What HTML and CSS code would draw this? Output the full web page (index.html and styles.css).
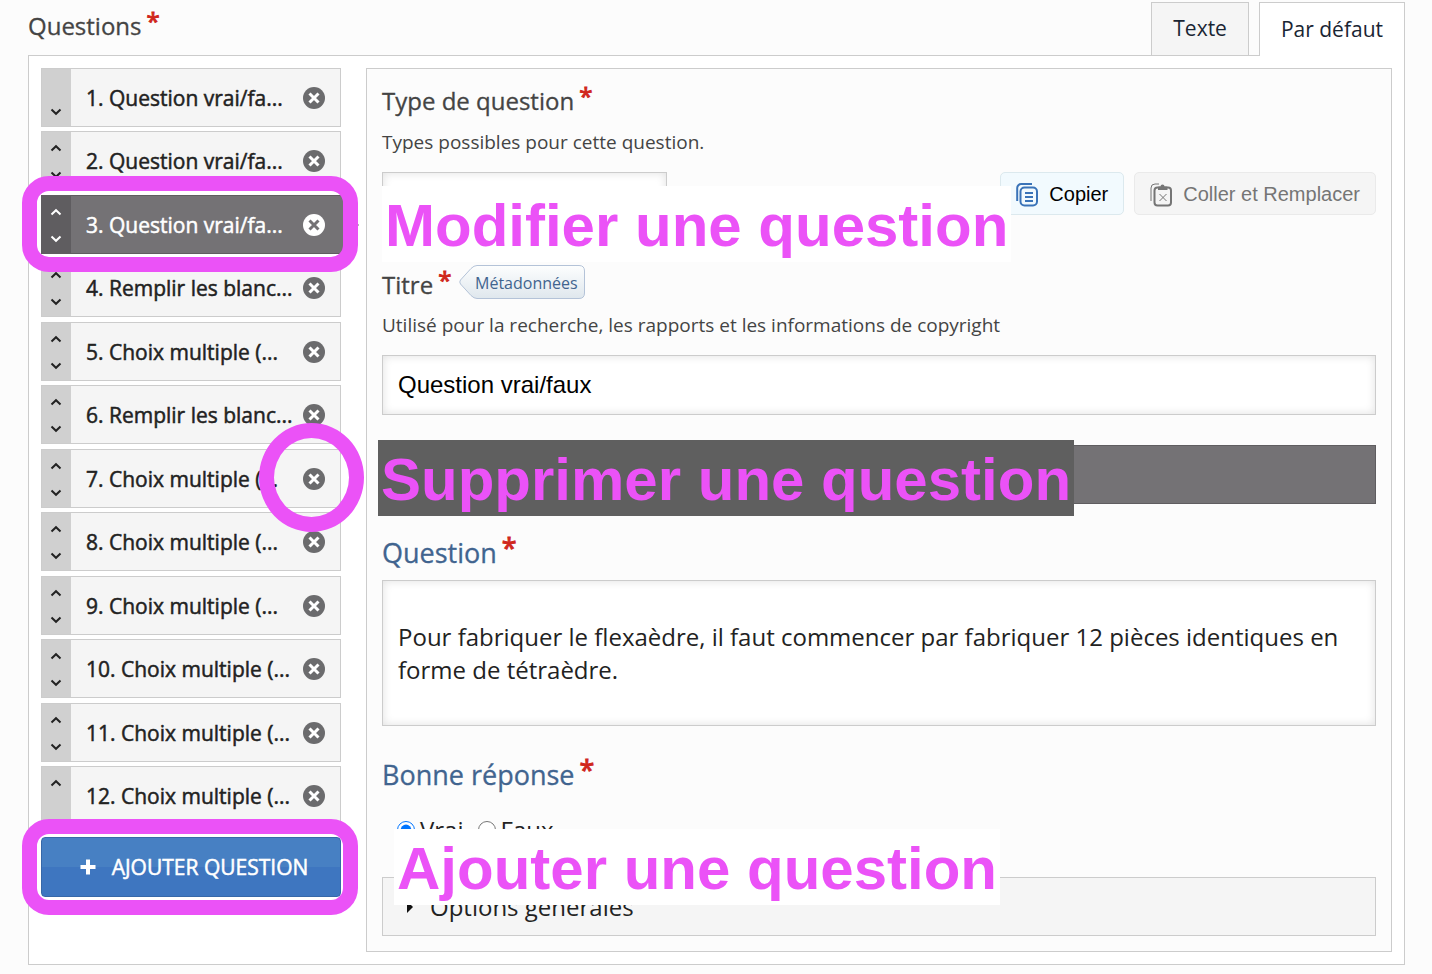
FILE: index.html
```html
<!DOCTYPE html>
<html lang="fr">
  <head>
    <meta charset="UTF-8" />
    <meta name="viewport" content="width=device-width, initial-scale=1.0" />
    <title>Questions</title>
    <link rel="stylesheet" href="styles.css">
  </head>
  <body>
    <svg class="sprite" aria-hidden="true">
      <symbol id="up" viewBox="0 0 12 8"><path d="M1.500 6.500L6 2.200L10.500 6.500" /></symbol>
      <symbol id="down" viewBox="0 0 12 8"><path d="M1.500 1.500L6 5.800L10.500 1.500" /></symbol>
      <symbol id="cross" viewBox="0 0 22 22">
        <circle cx="11" cy="11" r="11" />
        <path d="M6.500 6.500L15.500 15.500M15.500 6.500L6.500 15.500" />
      </symbol>
    </svg>

    <form class="editor">
      <header class="top">
        <h1 class="label">Questions<span class="star">*</span></h1>
        <nav class="tabs">
          <button type="button" class="tab">Texte</button>
          <button type="button" class="tab active">Par défaut</button>
        </nav>
      </header>

      <main class="panel">
        <aside class="side">
          <ol class="list" id="list">
            <li class="item">
              <div class="order"><button type="button" class="down" aria-label="Descendre"><svg><use href="#down" /></svg></button></div>
              <button type="button" class="name">1. Question vrai/fa...</button>
              <button type="button" class="remove" aria-label="Supprimer"><svg><use href="#cross" /></svg></button>
            </li>
            <li class="item">
              <div class="order"><button type="button" class="up" aria-label="Monter"><svg><use href="#up" /></svg></button><button type="button" class="down" aria-label="Descendre"><svg><use href="#down" /></svg></button></div>
              <button type="button" class="name">2. Question vrai/fa...</button>
              <button type="button" class="remove" aria-label="Supprimer"><svg><use href="#cross" /></svg></button>
            </li>
            <li class="item current">
              <div class="order"><button type="button" class="up" aria-label="Monter"><svg><use href="#up" /></svg></button><button type="button" class="down" aria-label="Descendre"><svg><use href="#down" /></svg></button></div>
              <button type="button" class="name">3. Question vrai/fa...</button>
              <button type="button" class="remove" aria-label="Supprimer"><svg><use href="#cross" /></svg></button>
              <span class="frame"></span>
            </li>
            <li class="item">
              <div class="order"><button type="button" class="up" aria-label="Monter"><svg><use href="#up" /></svg></button><button type="button" class="down" aria-label="Descendre"><svg><use href="#down" /></svg></button></div>
              <button type="button" class="name">4. Remplir les blanc...</button>
              <button type="button" class="remove" aria-label="Supprimer"><svg><use href="#cross" /></svg></button>
            </li>
            <li class="item">
              <div class="order"><button type="button" class="up" aria-label="Monter"><svg><use href="#up" /></svg></button><button type="button" class="down" aria-label="Descendre"><svg><use href="#down" /></svg></button></div>
              <button type="button" class="name">5. Choix multiple (...</button>
              <button type="button" class="remove" aria-label="Supprimer"><svg><use href="#cross" /></svg></button>
            </li>
            <li class="item">
              <div class="order"><button type="button" class="up" aria-label="Monter"><svg><use href="#up" /></svg></button><button type="button" class="down" aria-label="Descendre"><svg><use href="#down" /></svg></button></div>
              <button type="button" class="name">6. Remplir les blanc...</button>
              <button type="button" class="remove" aria-label="Supprimer"><svg><use href="#cross" /></svg></button>
            </li>
            <li class="item">
              <div class="order"><button type="button" class="up" aria-label="Monter"><svg><use href="#up" /></svg></button><button type="button" class="down" aria-label="Descendre"><svg><use href="#down" /></svg></button></div>
              <button type="button" class="name">7. Choix multiple (...</button>
              <button type="button" class="remove" aria-label="Supprimer"><svg><use href="#cross" /></svg></button>
              <span class="ring"></span>
            </li>
            <li class="item">
              <div class="order"><button type="button" class="up" aria-label="Monter"><svg><use href="#up" /></svg></button><button type="button" class="down" aria-label="Descendre"><svg><use href="#down" /></svg></button></div>
              <button type="button" class="name">8. Choix multiple (...</button>
              <button type="button" class="remove" aria-label="Supprimer"><svg><use href="#cross" /></svg></button>
            </li>
            <li class="item">
              <div class="order"><button type="button" class="up" aria-label="Monter"><svg><use href="#up" /></svg></button><button type="button" class="down" aria-label="Descendre"><svg><use href="#down" /></svg></button></div>
              <button type="button" class="name">9. Choix multiple (...</button>
              <button type="button" class="remove" aria-label="Supprimer"><svg><use href="#cross" /></svg></button>
            </li>
            <li class="item">
              <div class="order"><button type="button" class="up" aria-label="Monter"><svg><use href="#up" /></svg></button><button type="button" class="down" aria-label="Descendre"><svg><use href="#down" /></svg></button></div>
              <button type="button" class="name">10. Choix multiple (...</button>
              <button type="button" class="remove" aria-label="Supprimer"><svg><use href="#cross" /></svg></button>
            </li>
            <li class="item">
              <div class="order"><button type="button" class="up" aria-label="Monter"><svg><use href="#up" /></svg></button><button type="button" class="down" aria-label="Descendre"><svg><use href="#down" /></svg></button></div>
              <button type="button" class="name">11. Choix multiple (...</button>
              <button type="button" class="remove" aria-label="Supprimer"><svg><use href="#cross" /></svg></button>
            </li>
            <li class="item">
              <div class="order"><button type="button" class="up" aria-label="Monter"><svg><use href="#up" /></svg></button></div>
              <button type="button" class="name">12. Choix multiple (...</button>
              <button type="button" class="remove" aria-label="Supprimer"><svg><use href="#cross" /></svg></button>
            </li>
          </ol>
          <div class="add-wrap">
            <button type="button" class="add">
              <svg class="plus" viewBox="0 0 16 16"><path d="M8 0.500V15.500M0.500 8H15.500" /></svg>
              AJOUTER QUESTION
            </button>
            <span class="frame"></span>
          </div>
        </aside>

        <section class="content">
          <div class="field">
            <label class="label" for="type">Type de question<span class="star">*</span></label>
            <p class="help">Types possibles pour cette question.</p>
            <div class="row">
              <select id="type" class="box"><option></option></select>
              <div class="actions">
                <button type="button" class="copy">
                  <svg viewBox="0 0 22 24">
                    <path d="M1.200 18V5A4 4 0 0 1 5.200 1H16" />
                    <rect x="4.500" y="4.500" width="16.500" height="18" rx="4" />
                    <path d="M9 10H17M9 14H17M9 18H17" />
                  </svg>
                  Copier
                </button>
                <button type="button" class="paste" disabled>
                  <svg viewBox="0 0 22 24">
                    <path class="thin" d="M1 18V5A4 4 0 0 1 5 1H9" />
                    <rect x="4.500" y="4.500" width="16.500" height="18" rx="3" />
                    <path class="clip" d="M8 7V4.500A1 1 0 0 1 9 3.500H10.500A2 2 0 0 1 14.500 3.500H16.500A1 1 0 0 1 17.500 4.500V7Z" />
                    <path class="thin" d="M9.500 11L16.500 18M16.500 11L9.500 18" />
                  </svg>
                  Coller et Remplacer
                </button>
              </div>
              <strong class="note note-edit">Modifier une question</strong>
            </div>
          </div>

          <div class="field title">
            <div class="title-line">
              <label class="label" for="title">Titre<span class="star">*</span></label>
              <button type="button" class="meta">
                <svg viewBox="0 0 126 34">
                  <defs>
                    <linearGradient id="tag" x1="0" y1="0" x2="0" y2="1">
                      <stop offset="0" stop-color="#fdfefe" />
                      <stop offset="1" stop-color="#dfe7ed" />
                    </linearGradient>
                  </defs>
                  <path fill="url(#tag)" stroke="#b4c3d8" d="M1.500 15Q0 17 1.500 19L12 30.500Q15 33.500 18 33.500H120Q125.500 33.500 125.500 28V6Q125.500 0.500 120 0.500H18Q15 0.500 12 3.500Z" />
                </svg>
                <span>Métadonnées</span>
              </button>
            </div>
            <p class="help">Utilisé pour la recherche, les rapports et les informations de copyright</p>
            <input type="text" id="title" class="box" value="Question vrai/faux">
          </div>

          <div class="bar"><strong class="note note-delete">Supprimer une question</strong></div>

          <div class="field">
            <label class="label big" for="question">Question<span class="star">*</span></label>
            <textarea id="question" class="box" rows="2">Pour fabriquer le flexaèdre, il faut commencer par fabriquer 12 pièces identiques en forme de tétraèdre.</textarea>
          </div>

          <fieldset class="answer">
            <legend class="label big">Bonne réponse<span class="star">*</span></legend>
            <div class="radios">
              <label><input type="radio" name="answer" checked>Vrai</label>
              <label><input type="radio" name="answer">Faux</label>
            </div>
          </fieldset>

          <div class="options">
            <button type="button" class="toggle">Options générales</button>
            <strong class="note note-add">Ajouter une question</strong>
          </div>
        </section>
      </main>
    </form>
  </body>
</html>
```
FILE: styles.css
```css
* {
  box-sizing: border-box;
}
body {
  margin: 0;
  background: #fcfcfc;
  color: #222;
  font-family: 'Open Sans', sans-serif;
  font-size: 21px;
}
button,
fieldset {
  margin: 0;
  padding: 0;
  border: 0;
  background: none;
  font: inherit;
  color: inherit;
}
.sprite {
  display: none;
}
.editor {
  padding: 2px 27px 9px 28px;
}

/* header and tabs */
.top {
  display: flex;
  justify-content: space-between;
  align-items: flex-start;
}
.label {
  display: block;
  margin: 0;
  padding: 0;
  font-size: 24px;
  font-weight: 400;
  line-height: 34px;
  color: #444;
  -webkit-text-stroke: 0.3px;
}
.top .label {
  margin-top: 7px;
}
.star {
  margin-left: 5px;
  color: #d0271d;
  line-height: 0;
  vertical-align: 5px;
  -webkit-text-stroke: 1px;
}
.tabs {
  display: flex;
  gap: 10px;
}
.tab {
  height: 53px;
  padding: 0 21px 2px;
  border: 1px solid #ccc;
  border-bottom: 0;
  background: #f5f5f5;
  font-size: 21px;
  color: #1a2533;
}
.tab.active {
  height: 54px;
  margin-bottom: -1px;
  background: #fff;
  position: relative;
}

/* list of questions */
.panel {
  display: flex;
  align-items: flex-start;
  gap: 25px;
  padding: 12px;
  border: 1px solid #ccc;
  background: #fff;
}
.side {
  width: 300px;
  flex: none;
}
.list {
  margin: 0;
  padding: 0;
  list-style: none;
}
.item {
  position: relative;
  display: flex;
  height: 59px;
  margin-bottom: 4px;
  border: 1px solid #ccc;
  background: #f5f5f5;
}
.item:nth-child(even) {
  margin-bottom: 5px;
}
.order {
  display: flex;
  flex-direction: column;
  width: 29px;
  padding: 9px 1px 7px 0;
  background: #d0d0d0;
}
.order button {
  height: 14px;
  line-height: 0;
}
.order .down {
  margin-top: auto;
}
.order svg {
  width: 12px;
  height: 8px;
  fill: none;
  stroke: #222;
  stroke-width: 2;
}
.name {
  flex: 1;
  padding-left: 15px;
  text-align: left;
  white-space: nowrap;
  -webkit-text-stroke: 0.5px;
}
.remove {
  width: 22px;
  margin-right: 15px;
  line-height: 0;
}
.remove svg {
  width: 22px;
  height: 22px;
  fill: #6b6b6d;
  stroke: #fff;
  stroke-width: 3;
}
#cross circle {
  stroke: none;
}
.current {
  margin-right: -4px;
  border-color: #5f5d60;
  background: #747275;
  color: #fff;
}
.current::after {
  content: '';
  position: absolute;
  left: 100%;
  top: 14px;
  border: 15px solid transparent;
  border-left-color: #747275;
  border-right: 0;
}
.current .order {
  background: #5f5d60;
}
.current .order svg {
  stroke: #fff;
}
.current .remove {
  margin-right: 19px;
}
.current .remove svg {
  fill: #fff;
  stroke: #747275;
}
.add-wrap {
  position: relative;
  margin-top: 12px;
  margin-bottom: 55px;
}
.list .item:last-child {
  margin-bottom: 0;
}
.add {
  display: flex;
  align-items: center;
  justify-content: center;
  gap: 16px;
  width: 100%;
  height: 60px;
  padding-left: 6px;
  border: 1px solid #3768a8;
  border-radius: 4px;
  background: linear-gradient(#4780c3 50%, #3e76c0 50%);
  color: #fff;
  -webkit-text-stroke: 0.5px;
}
.plus {
  width: 16px;
  height: 16px;
  stroke: #fff;
  stroke-width: 4;
}

/* highlights over the page */
.frame,
.ring {
  position: absolute;
  z-index: 2;
  border: 15px solid #eb52f7;
  pointer-events: none;
}
.frame {
  left: -19px;
  top: -18px;
  width: 336px;
  height: 96px;
  border-radius: 27px;
}
.item .frame {
  left: -20px;
  top: -20px;
}
.ring {
  right: -24px;
  top: -27px;
  width: 105px;
  height: 109px;
  border-radius: 50%;
}
.note {
  position: absolute;
  z-index: 1;
  padding: 4px 3px 0;
  background: #fff;
  color: #eb52f7;
  font: bold 60px/72px 'Liberation Sans', sans-serif;
  white-space: nowrap;
}
.note-edit {
  left: 0;
  top: 14px;
}
.note-delete {
  left: -5px;
  top: -6px;
  background: #5f5f5f;
}
.note-add {
  left: 12px;
  top: -48px;
}

/* form of the selected question */
.content {
  flex: 1;
  min-width: 0;
  padding: 15px;
  border: 1px solid #ccc;
  background: #fcfcfc;
}
.help {
  margin: 12px 0 18px;
  font-size: 19px;
  line-height: 24px;
  color: #444;
}
.box {
  display: block;
  width: 100%;
  height: 60px;
  margin: 0;
  padding: 0 15px;
  border: 1px solid #ccc;
  border-radius: 0;
  background: #fff;
  box-shadow: inset 0 0 10px rgba(0, 0, 0, 0.12);
  font-family: 'Liberation Sans', sans-serif;
  font-size: 24px;
  color: #000;
}
.row {
  position: relative;
  display: flex;
  justify-content: space-between;
  align-items: flex-start;
}
select.box {
  width: 285px;
  appearance: none;
}
.actions {
  display: flex;
  gap: 10px;
}
.actions button {
  display: flex;
  align-items: center;
  gap: 11px;
  height: 43px;
  padding: 2px 15px 0;
  border: 1px solid #dce9ee;
  border-radius: 5px;
  background: #f2fafe;
  font-family: 'Liberation Sans', sans-serif;
  font-size: 20px;
  color: #000;
}
.actions svg {
  width: 22px;
  height: 24px;
  fill: none;
  stroke: #3a73b8;
  stroke-width: 2;
}
.actions .paste {
  border-color: #eaeaea;
  background: #f5f5f5;
  color: #757575;
}
.actions .paste svg {
  stroke: #757575;
}
.paste .thin {
  stroke-width: 1;
}
.paste .clip {
  fill: #757575;
  stroke: none;
}
.title {
  margin-top: 33px;
}
.title .help {
  margin-top: 11px;
}
.title-line {
  display: flex;
  gap: 8px;
}
.title-line .label {
  margin-top: 3px;
}
.meta {
  position: relative;
  width: 126px;
  height: 34px;
  padding: 2px 0 0 8px;
  font-size: 16px;
  color: #41648f;
}
.meta svg {
  position: absolute;
  left: 0;
  top: 0;
  width: 126px;
  height: 34px;
}
.meta span {
  position: relative;
}
.bar {
  position: relative;
  height: 59px;
  margin: 30px 0 32px;
  border: 1px solid #5f5d60;
  background: #747275;
}
.big {
  font-size: 27px;
  color: #41648f;
}
textarea.box {
  height: auto;
  margin-top: 10px;
  padding: 39px 15px;
  overflow: hidden;
  resize: none;
  font-family: 'Open Sans', sans-serif;
  line-height: 33px;
  color: #222;
}
.answer {
  margin-top: 32px;
}
.radios {
  display: flex;
  gap: 14px;
  margin: 21px 0 30px;
  padding-left: 15px;
  font-size: 24px;
  line-height: 34px;
}
.radios label {
  display: flex;
  align-items: center;
  gap: 5px;
}
.radios input {
  width: 18px;
  height: 18px;
  margin: 0;
}
.options {
  position: relative;
}
.toggle {
  display: flex;
  align-items: center;
  gap: 17px;
  width: 100%;
  height: 59px;
  padding: 0 24px;
  border: 1px solid #ccc;
  background: #f5f5f5;
  font-size: 24px;
}
.toggle::before {
  content: '';
  border: 6px solid transparent;
  border-left-color: #111;
  border-right: 0;
}
```
